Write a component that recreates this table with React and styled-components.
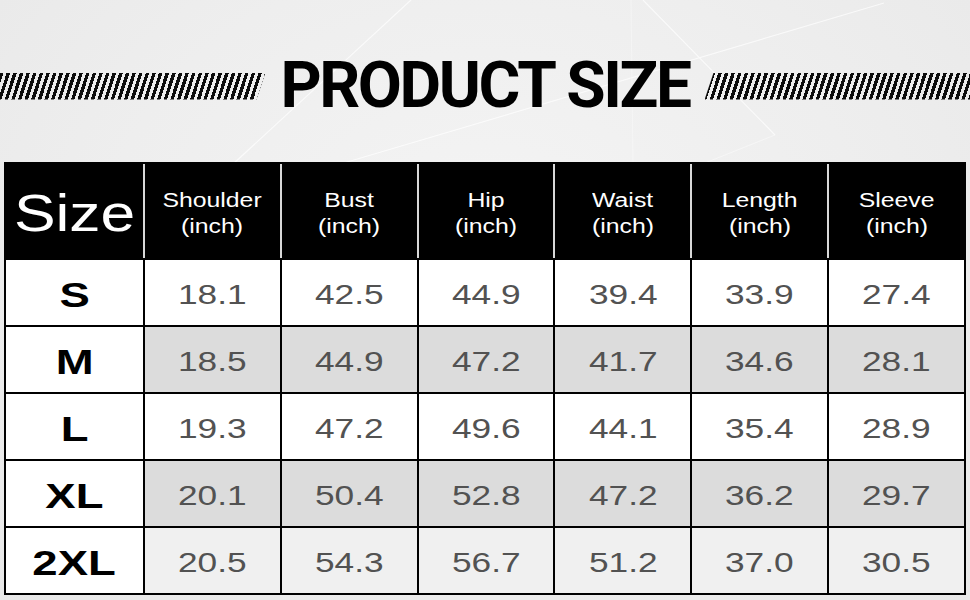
import React from 'react';
import styled, { createGlobalStyle } from 'styled-components';

const GlobalStyle = createGlobalStyle`
  html, body {
    margin: 0;
    padding: 0;
    background: #eeeeee;
  }
  body {
    font-family: "Liberation Sans", Arial, sans-serif;
  }
`;

const Page = styled.div`
  position: relative;
  width: 970px;
  height: 600px;
  overflow: hidden;
  background:
    radial-gradient(ellipse at 50% 40%, #f4f4f4 0%, #eeeeee 55%, #e8e8e8 100%);
`;

const Backdrop = styled.svg`
  position: absolute;
  inset: 0;
  width: 970px;
  height: 170px;
  pointer-events: none;
`;

const Banner = styled.header`
  position: relative;
  height: 162px;
  padding-top: 56px;
  box-sizing: border-box;
`;

const TitleRow = styled.div`
  display: flex;
  align-items: center;
  gap: 15px;
  height: 60px;
`;

const Stripes = styled.div`
  flex: 1;
  height: 27px;
  background: repeating-linear-gradient(
    108deg,
    #0c0c0c 0 3.3px,
    transparent 3.3px 6.3px
  );
  clip-path: ${(p) =>
    p.$side === 'left'
      ? 'polygon(0 0, 100% 0, calc(100% - 9px) 100%, 0 100%)'
      : 'polygon(9px 0, 100% 0, 100% 100%, 0 100%)'};
`;

const Title = styled.h1`
  margin: 0;
  font-family: Roboto, "Liberation Sans", sans-serif;
  font-weight: 700;
  font-size: 64px;
  line-height: 60px;
  letter-spacing: -2.4px;
  color: #000;
  white-space: nowrap;
`;

const Table = styled.div`
  position: relative;
  display: grid;
  grid-template-columns: 137px repeat(6, 1fr);
  grid-template-rows: 94px repeat(5, 65px);
  gap: 2px;
  padding: 2px;
  width: 962px;
  margin-left: 4px;
  box-sizing: border-box;
  background: #000;
`;

const HeadCell = styled.div`
  display: flex;
  flex-direction: column;
  align-items: center;
  justify-content: center;
  padding-top: 3px;
  background: #000;
  color: #fff;
  &:not(:first-child) {
    box-shadow: -2px 0 0 #d9d9d9;
  }
`;

const SizeHead = styled.span`
  display: inline-block;
  font-size: 52px;
  transform: scaleX(1.2);
`;

const HeadLabel = styled.span`
  display: inline-block;
  font-size: 20px;
  line-height: 26px;
  transform: scaleX(1.24);
`;

const Cell = styled.div`
  display: flex;
  align-items: center;
  justify-content: center;
  padding-top: 4px;
  background: ${(p) => p.$bg};
`;

const SizeLabel = styled.span`
  display: inline-block;
  font-size: 35px;
  font-weight: 700;
  color: #000;
  transform: scaleX(1.3);
`;

const Value = styled.span`
  display: inline-block;
  font-size: 28px;
  color: #525252;
  transform: scaleX(1.26);
`;

const columns = ['Shoulder', 'Bust', 'Hip', 'Waist', 'Length', 'Sleeve'];

const rows = [
  { size: 'S', bg: '#ffffff', values: ['18.1', '42.5', '44.9', '39.4', '33.9', '27.4'] },
  { size: 'M', bg: '#dcdcdc', values: ['18.5', '44.9', '47.2', '41.7', '34.6', '28.1'] },
  { size: 'L', bg: '#ffffff', values: ['19.3', '47.2', '49.6', '44.1', '35.4', '28.9'] },
  { size: 'XL', bg: '#dcdcdc', values: ['20.1', '50.4', '52.8', '47.2', '36.2', '29.7'] },
  { size: '2XL', bg: '#f0f0f0', values: ['20.5', '54.3', '56.7', '51.2', '37.0', '30.5'] },
];

export default function App() {
  return (
    <Page>
      <GlobalStyle />
      <Backdrop viewBox="0 0 970 170">
        <g stroke="#ffffff" strokeWidth="1.2" fill="none" opacity="0.7">
          <line x1="232" y1="165" x2="411" y2="0" />
          <line x1="337" y1="165" x2="884" y2="3" />
          <line x1="643" y1="0" x2="775" y2="135" />
          <line x1="631" y1="0" x2="633" y2="165" opacity="0.5" />
          <line x1="700" y1="165" x2="775" y2="135" opacity="0.6" />
        </g>
      </Backdrop>

      <Banner>
        <TitleRow>
          <Stripes $side="left" />
          <Title>PRODUCT SIZE</Title>
          <Stripes $side="right" />
        </TitleRow>
      </Banner>

      <Table>
        <HeadCell>
          <SizeHead>Size</SizeHead>
        </HeadCell>
        {columns.map((c) => (
          <HeadCell key={c}>
            <HeadLabel>{c}</HeadLabel>
            <HeadLabel>(inch)</HeadLabel>
          </HeadCell>
        ))}

        {rows.map((r) => (
          <React.Fragment key={r.size}>
            <Cell $bg="#ffffff">
              <SizeLabel>{r.size}</SizeLabel>
            </Cell>
            {r.values.map((v, i) => (
              <Cell key={i} $bg={r.bg}>
                <Value>{v}</Value>
              </Cell>
            ))}
          </React.Fragment>
        ))}
      </Table>
    </Page>
  );
}
